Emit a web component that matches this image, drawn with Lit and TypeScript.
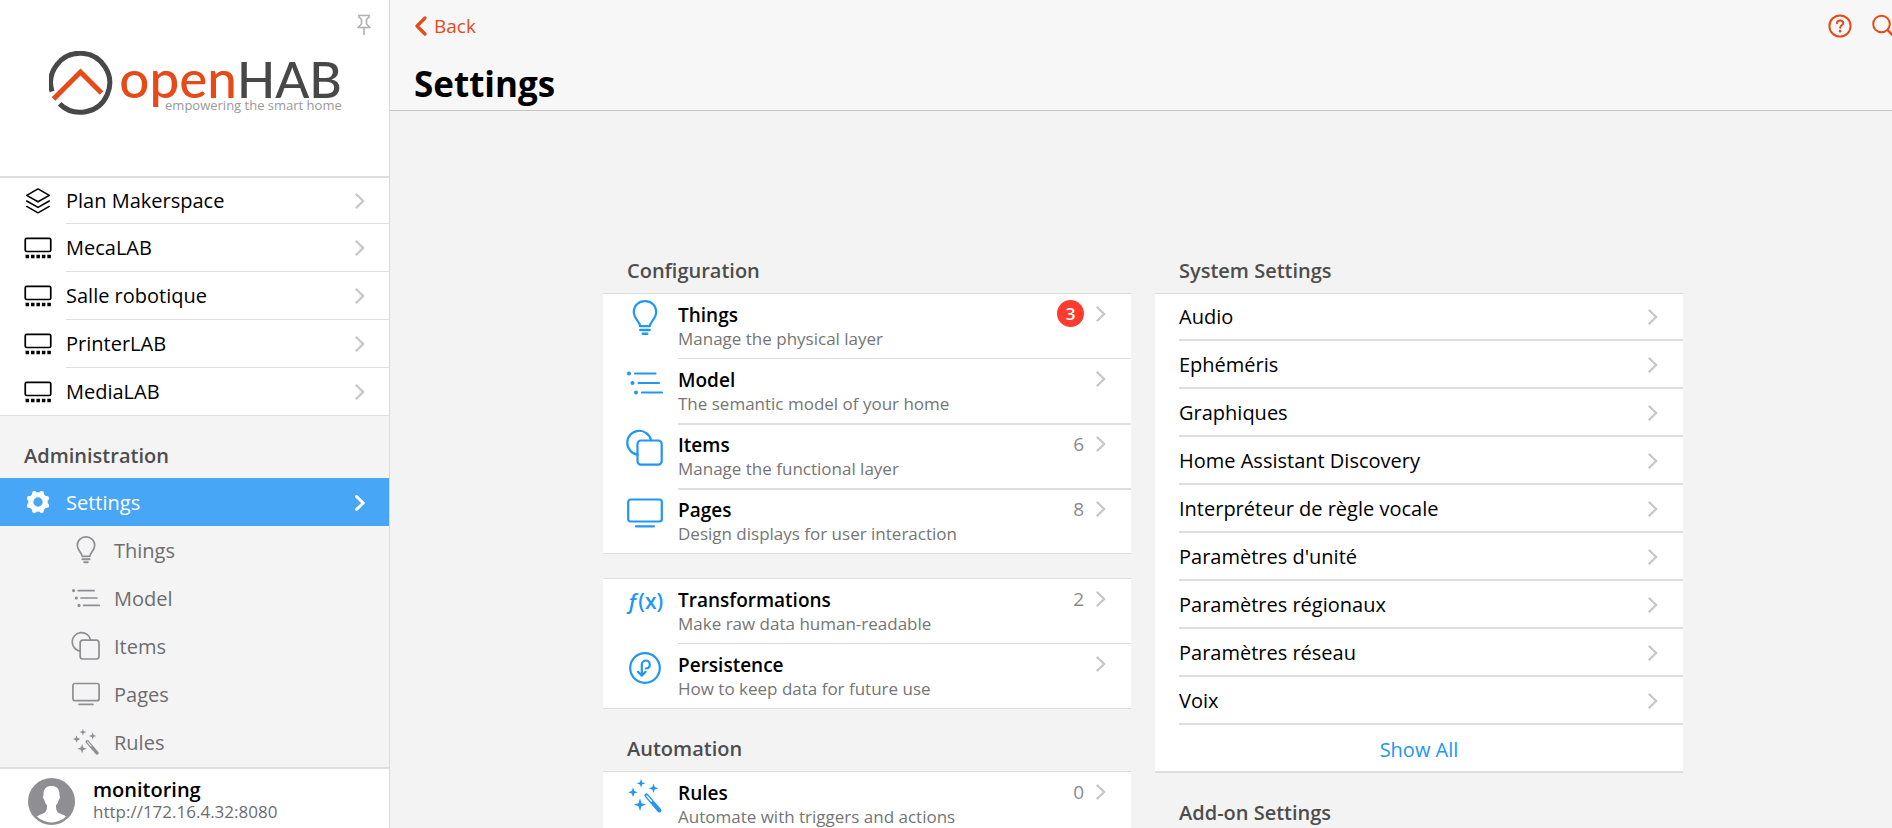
import { LitElement, html, svg, css, nothing, SVGTemplateResult } from "lit";
import { customElement, property } from "lit/decorators.js";
import { classMap } from "lit/directives/class-map.js";

const ICONS: Record<string, SVGTemplateResult> = {
  bulb: svg`<path d="M13.2 26.2c0-4.2-6.4-7.4-6.4-14.2C6.8 5.8 11.4 1.2 18 1.2S29.200 5.800 29.200 12c0 6.800-6.400 10-6.400 14.200z"/><path d="M13.400 30h9.200M15.800 33.800h4.400" stroke-width="2.600"/>`,
  model: svg`<path d="M8 8.500h20.500M11.500 18H32M15 27.500h20" /><g fill="currentColor" stroke="none"><circle cx="2" cy="8.500" r="2"/><circle cx="5.500" cy="18" r="2"/><circle cx="9" cy="27.500" r="2"/></g>`,
  items: svg`<path d="M24 10.200A12 12 0 1 0 10.500 24.600"/><rect x="10.500" y="10.500" width="24.200" height="24.200" rx="3.500"/>`,
  pages: svg`<rect x="1.200" y="4.500" width="33.600" height="22" rx="2.500"/><path d="M9 31.300h18"/>`,
  persistence: svg`<circle cx="18" cy="18" r="14.800"/><path d="M14.800 25.500V14.500a4 4 0 0 1 8 0c0 2.600-1.800 4-4 4M11 21.800l3.800 3.800 3.800-3.800" stroke-width="2.200"/>`,
  rules: svg`<path d="M19.500 17.500l12.800 14.800" stroke-width="4.200"/><path class="cut" d="M20 18l4.500 5.200" stroke-width="1.400"/><g fill="currentColor" stroke="none"><path d="M14 1l1.100 3.200 3.200 1.100-3.200 1.100L14 9.600l-1.100-3.200-3.200-1.100 3.200-1.100zM26.500 5.500l1.200 3.600 3.600 1.200-3.600 1.200-1.200 3.600-1.200-3.600-3.600-1.200 3.600-1.200zM6 9.500l1.300 3.500 3.500 1.300-3.500 1.300L6 19.100l-1.300-3.500-3.500-1.300L4.700 13zM13 20.500l1.500 4.700 4.700 1.500-4.700 1.500L13 32.900l-1.500-4.700-4.700-1.500 4.700-1.500z"/></g>`,
  layers: svg`<path d="M18 2.500l14.500 8.200L18 18.900 3.500 10.700zM3.500 18L18 26.200 32.500 18M3.500 25L18 33.200 32.500 25" stroke-width="2"/>`,
  panel: svg`<rect x="1.600" y="5.500" width="32.800" height="17" rx="2"/><path d="M2 29h32.500" stroke-width="4.500" stroke-dasharray="4.500 2.500" stroke-linecap="butt"/>`,
  gear: svg`<circle cx="18" cy="18" r="9.300" stroke-width="6.600"/><path stroke-width="6" d="M22.670 6.730v.010M29.270 13.330v.010M29.270 22.670v.010M22.670 29.270v.010M13.330 6.730v.010M6.730 13.330v.010M6.730 22.670v.010M13.330 29.270v.010"/>`,
};

const icon = (name: string) =>
  name === "fx"
    ? html`<span class="icon fx" aria-hidden="true"><i>ƒ</i>(x)</span>`
    : html`<svg class="icon" viewBox="0 0 36 36" aria-hidden="true">${ICONS[name]}</svg>`;

const chevron = html`<svg class="chevron" viewBox="0 0 10 16" aria-hidden="true">
  <path d="M1.500 1.500L8.200 8l-6.700 6.500" />
</svg>`;

const shared = css`
  * {
    box-sizing: border-box;
  }
  a {
    color: inherit;
    text-decoration: none;
  }
  button {
    padding: 0;
    border: 0;
    background: none;
    font: inherit;
    color: inherit;
    cursor: pointer;
  }
  h1,
  h2,
  ul {
    margin: 0;
    padding: 0;
    list-style: none;
  }
  .icon {
    flex: none;
    display: block;
    width: 28px;
    height: 28px;
    fill: none;
    stroke: currentColor;
    stroke-width: 2.200;
    stroke-linecap: round;
    stroke-linejoin: round;
    overflow: visible;
  }
  .icon .cut {
    stroke: #ffffff;
  }
  .chevron {
    flex: none;
    display: block;
    width: 10px;
    height: 16px;
    fill: none;
    stroke: #c7c7c9;
    stroke-width: 2.400;
    stroke-linecap: round;
    stroke-linejoin: round;
  }
  .heading {
    padding: 28px 24px 10px;
    font-size: 20px;
    font-weight: 600;
    line-height: 24px;
    color: #4d4d4d;
  }
`;

interface NavEntry {
  icon: string;
  label: string;
}

const PAGES: NavEntry[] = [
  { icon: "layers", label: "Plan Makerspace" },
  { icon: "panel", label: "MecaLAB" },
  { icon: "panel", label: "Salle robotique" },
  { icon: "panel", label: "PrinterLAB" },
  { icon: "panel", label: "MediaLAB" },
];

const ADMIN: NavEntry[] = [
  { icon: "bulb", label: "Things" },
  { icon: "model", label: "Model" },
  { icon: "items", label: "Items" },
  { icon: "pages", label: "Pages" },
  { icon: "rules", label: "Rules" },
];

@customElement("oh-sidebar")
export class OhSidebar extends LitElement {
  static styles = [
    shared,
    css`
      :host {
        position: relative;
        display: flex;
        flex-direction: column;
        height: 100%;
        border-right: 1px solid #d9d9d9;
        background: #f4f4f4;
      }
      .brand {
        flex: none;
        display: flex;
        justify-content: center;
        gap: 6px;
        height: 178px;
        padding: 51px 0 0 2px;
        border-bottom: 2px solid #dedede;
        background: #ffffff;
      }
      .mark {
        flex: none;
        width: 64px;
        height: 64px;
        fill: none;
        stroke-width: 5;
      }
      .words {
        padding-top: 8px;
        text-align: right;
      }
      .wordmark {
        height: 38px;
        font-family: Lato, sans-serif;
        font-size: 50px;
        font-weight: 500;
        line-height: 38px;
        color: #484848;
      }
      .wordmark em {
        font-size: 53px;
        font-style: normal;
        color: #e64a19;
      }
      .tagline {
        font-size: 13px;
        line-height: 16px;
        color: #999999;
      }
      .pin {
        position: absolute;
        top: 14px;
        right: 17px;
      }
      .pin svg {
        display: block;
        width: 16px;
        height: 22px;
        fill: none;
        stroke: #b0b0b2;
        stroke-width: 1.600;
        stroke-linejoin: round;
      }
      .scroll {
        flex: 1;
        min-height: 0;
        overflow: hidden;
      }
      .pages {
        background: #ffffff;
        border-bottom: 1px solid #dedede;
      }
      .pages li:first-child .link {
        height: 46px;
      }
      .pages li:last-child .link {
        height: 47px;
      }
      .pages li:last-child .label {
        border-bottom: 0;
      }
      .link {
        display: flex;
        align-items: center;
        height: 48px;
        padding-left: 24px;
        gap: 14px;
        font-size: 20px;
        line-height: 24px;
      }
      .label {
        flex: 1;
        align-self: stretch;
        display: flex;
        align-items: center;
        justify-content: space-between;
        padding: 1px 24px 0 0;
      }
      .pages .label {
        border-bottom: 1px solid #dedede;
      }
      .active {
        background: #48a6f6;
        color: #ffffff;
        font-weight: 500;
      }
      .active .chevron {
        stroke: #ffffff;
        stroke-width: 3;
      }
      .sub {
        padding-left: 72px;
        color: #6d6d70;
      }
      .sub .icon {
        color: #8e8e93;
      }
      .sub .icon .cut {
        stroke: #f4f4f4;
      }
      .user {
        flex: none;
        display: flex;
        gap: 18px;
        padding: 9px 28px 3px;
        border-top: 2px solid #dedede;
        background: #ffffff;
      }
      .avatar {
        flex: none;
        width: 47px;
        height: 47px;
      }
      .name {
        font-size: 20px;
        font-weight: 600;
        line-height: 24px;
        color: #000000;
      }
      .url {
        font-size: 17px;
        line-height: 20px;
        color: #6d6d70;
      }
    `,
  ];

  render() {
    return html`
      <div class="brand">
        <svg class="mark" viewBox="0 0 64 64" aria-hidden="true">
          <path stroke="#484848" d="M10.600 52.900A29.500 29.500 0 1 0 3 40.500" />
          <path stroke="#e64a19" d="M4.500 48L31.500 21l21 21" />
        </svg>
        <div class="words">
          <div class="wordmark"><em>open</em>HAB</div>
          <div class="tagline">empowering the smart home</div>
        </div>
      </div>
      <button class="pin" aria-label="Pin sidebar">
        <svg viewBox="0 0 16 22">
          <path d="M2 1.500h12M3 1.500v1.500l2.500 2.500v4.500L2 13.500h12L10.500 10V5.500L13 3V1.500M8 13.500v7.500" />
        </svg>
      </button>
      <nav class="scroll">
        <ul class="pages">
          ${PAGES.map(
            (p) => html`<li>
              <a class="link" href="#">${icon(p.icon)}<span class="label">${p.label}${chevron}</span></a>
            </li>`
          )}
        </ul>
        <h2 class="heading">Administration</h2>
        <a class="link active" href="#" aria-current="page"
          >${icon("gear")}<span class="label">Settings${chevron}</span></a
        >
        <ul>
          ${ADMIN.map(
            (p) => html`<li><a class="link sub" href="#">${icon(p.icon)}<span class="label">${p.label}</span></a></li>`
          )}
        </ul>
      </nav>
      <a class="user" href="#">
        <svg class="avatar" viewBox="0 0 47 47" aria-hidden="true">
          <circle cx="23.500" cy="23.500" r="23.500" fill="#8e8e93" />
          <path
            fill="#ffffff"
            d="M23.500 8c-5 0-8.300 2.600-8 9.500-.8.500-.5 3.500.8 4.300.5 2.600 1.200 4 2.700 5.400 0 5.300-1 7.300-4.500 8.500-2.700.9-4.200 1.500-5.500 2.700A20.500 20.500 0 0 0 38 38.400c-1.300-1.200-2.800-1.800-5.500-2.700-3.500-1.200-4.500-3.200-4.500-8.500 1.500-1.400 2.200-2.800 2.700-5.400 1.300-.8 1.600-3.800.8-4.300.3-6.900-3-9.500-8-9.500z"
          />
        </svg>
        <div>
          <div class="name">monitoring</div>
          <div class="url">http://172.16.4.32:8080</div>
        </div>
      </a>
    `;
  }
}

interface MediaEntry {
  icon: string;
  title: string;
  text: string;
  count?: number;
  alert?: boolean;
}

@customElement("oh-media-list")
export class OhMediaList extends LitElement {
  @property({ attribute: false }) entries: MediaEntry[] = [];

  static styles = [
    shared,
    css`
      :host {
        display: block;
      }
      .list {
        border-top: 1px solid #dedede;
        background: #ffffff;
      }
      .row {
        position: relative;
        display: flex;
        gap: 15px;
        height: 65px;
        padding: 0 25px 0 24px;
      }
      .row::after {
        content: "";
        position: absolute;
        left: 75px;
        right: 0;
        bottom: -1px;
        height: 2px;
        z-index: 1;
        background: #dedede;
      }
      li:first-child .row::after {
        bottom: 0;
        height: 1px;
      }
      li:last-child .row::after {
        left: 0;
        bottom: 0;
        height: 1px;
      }
      .icon {
        width: 36px;
        height: 36px;
        margin-top: 6px;
        color: #2196f3;
      }
      .fx {
        display: flex;
        align-items: center;
        justify-content: center;
        font-size: 21px;
        line-height: 32px;
        height: 32px;
        font-weight: 600;
      }
      .body {
        flex: 1;
        padding-top: 9px;
      }
      .title {
        font-size: 19px;
        font-weight: 600;
        line-height: 24px;
        color: #000000;
      }
      .text {
        font-size: 17px;
        line-height: 24px;
        color: #757575;
      }
      .after {
        display: flex;
        align-items: center;
        gap: 12px;
        height: 27px;
        margin-top: 6px;
        font-size: 19px;
        color: #8a8a8d;
      }
      .badge {
        min-width: 27px;
        border-radius: 14px;
        background: #ff3b30;
        color: #ffffff;
        font-size: 17px;
        font-weight: 600;
        line-height: 27px;
        text-align: center;
      }
    `,
  ];

  render() {
    return html`<ul class="list">
      ${this.entries.map(
        (e) => html`<li>
          <a class="row" href="#">
            ${icon(e.icon)}
            <div class="body">
              <div class="title">${e.title}</div>
              <div class="text">${e.text}</div>
            </div>
            <div class="after">
              ${e.count === undefined
                ? nothing
                : html`<span class=${classMap({ badge: !!e.alert })}>${e.count}</span>`}
              ${chevron}
            </div>
          </a>
        </li>`
      )}
    </ul>`;
  }
}

const CONFIGURATION: MediaEntry[] = [
  { icon: "bulb", title: "Things", text: "Manage the physical layer", count: 3, alert: true },
  { icon: "model", title: "Model", text: "The semantic model of your home" },
  { icon: "items", title: "Items", text: "Manage the functional layer", count: 6 },
  { icon: "pages", title: "Pages", text: "Design displays for user interaction", count: 8 },
];

const DATA: MediaEntry[] = [
  { icon: "fx", title: "Transformations", text: "Make raw data human-readable", count: 2 },
  { icon: "persistence", title: "Persistence", text: "How to keep data for future use" },
];

const AUTOMATION: MediaEntry[] = [
  { icon: "rules", title: "Rules", text: "Automate with triggers and actions", count: 0 },
];

const SYSTEM = [
  "Audio",
  "Ephéméris",
  "Graphiques",
  "Home Assistant Discovery",
  "Interpréteur de règle vocale",
  "Paramètres d'unité",
  "Paramètres régionaux",
  "Paramètres réseau",
  "Voix",
];

@customElement("app-root")
export class AppRoot extends LitElement {
  static styles = [
    shared,
    css`
      :host {
        display: grid;
        grid-template-columns: 390px minmax(0, 1fr);
        grid-template-rows: minmax(0, 1fr);
        height: 100vh;
        overflow: hidden;
        background: #f3f3f3;
        color: #000000;
        font-family: "Open Sans", "Noto Sans", sans-serif;
      }
      .page {
        display: flex;
        flex-direction: column;
        min-height: 0;
        margin-right: -4px;
      }
      .top {
        flex: none;
        padding: 0 0 0 24px;
        border-bottom: 1px solid #c4c4c4;
        background: #f7f7f7;
      }
      .bar {
        display: flex;
        align-items: center;
        justify-content: space-between;
        height: 52px;
        color: #e64a19;
      }
      .back {
        display: flex;
        align-items: center;
        gap: 7px;
        font-size: 19px;
        line-height: 24px;
      }
      .back svg {
        width: 13px;
        height: 20px;
        fill: none;
        stroke: currentColor;
        stroke-width: 3.200;
        stroke-linecap: round;
        stroke-linejoin: round;
      }
      .tools {
        display: flex;
        gap: 20px;
      }
      .tools svg {
        display: block;
        width: 24px;
        height: 24px;
        fill: none;
        stroke: currentColor;
        stroke-width: 2;
        stroke-linecap: round;
      }
      .title {
        height: 58px;
        font-size: 35px;
        font-weight: 700;
        line-height: 64px;
      }
      .content {
        flex: 1;
        min-height: 0;
        overflow: hidden;
        display: grid;
        grid-template-columns: repeat(2, minmax(0, 528px));
        justify-content: center;
        align-items: start;
        gap: 24px;
        padding: 120px 24px 0;
      }
      .spaced {
        margin-top: 24px;
      }
      .simple {
        background: #ffffff;
        box-shadow: inset 0 1px #dedede, inset 0 -2px #dedede;
      }
      .row {
        display: flex;
        align-items: center;
        justify-content: space-between;
        height: 48px;
        margin-left: 24px;
        padding: 1px 25px 0 0;
        border-bottom: 2px solid #dedede;
        font-size: 20px;
        line-height: 24px;
      }
      .all {
        display: block;
        width: 100%;
        height: 48px;
        padding-top: 2px;
        font-size: 20px;
        line-height: 24px;
        color: #2196f3;
        text-align: center;
      }
    `,
  ];

  render() {
    return html`
      <oh-sidebar></oh-sidebar>
      <main class="page">
        <header class="top">
          <div class="bar">
            <a class="back" href="#">
              <svg viewBox="0 0 13 20" aria-hidden="true"><path d="M11 2L3 10l8 8" /></svg>
              Back
            </a>
            <div class="tools">
              <button aria-label="Help">
                <svg viewBox="0 0 24 24">
                  <circle cx="12" cy="12" r="10.600" />
                  <path d="M9 9.300c.1-1.700 1.300-2.800 3.100-2.800s3.100 1.100 3.100 2.600c0 2.200-3 2.200-3 4.400v.3" />
                  <path d="M12.100 17.100v.1" stroke-width="2.600" />
                </svg>
              </button>
              <button aria-label="Search">
                <svg viewBox="0 0 24 24">
                  <circle cx="9.500" cy="10" r="8.300" />
                  <path d="M15.500 16l7 7" stroke-width="2.400" />
                </svg>
              </button>
            </div>
          </div>
          <h1 class="title">Settings</h1>
        </header>
        <div class="content">
          <section>
            <h2 class="heading">Configuration</h2>
            <oh-media-list .entries=${CONFIGURATION}></oh-media-list>
            <oh-media-list class="spaced" .entries=${DATA}></oh-media-list>
            <h2 class="heading">Automation</h2>
            <oh-media-list .entries=${AUTOMATION}></oh-media-list>
          </section>
          <section>
            <h2 class="heading">System Settings</h2>
            <div class="simple">
              <ul>
                ${SYSTEM.map((label) => html`<li><a class="row" href="#">${label}${chevron}</a></li>`)}
              </ul>
              <button class="all">Show All</button>
            </div>
            <h2 class="heading">Add-on Settings</h2>
          </section>
        </div>
      </main>
    `;
  }
}
